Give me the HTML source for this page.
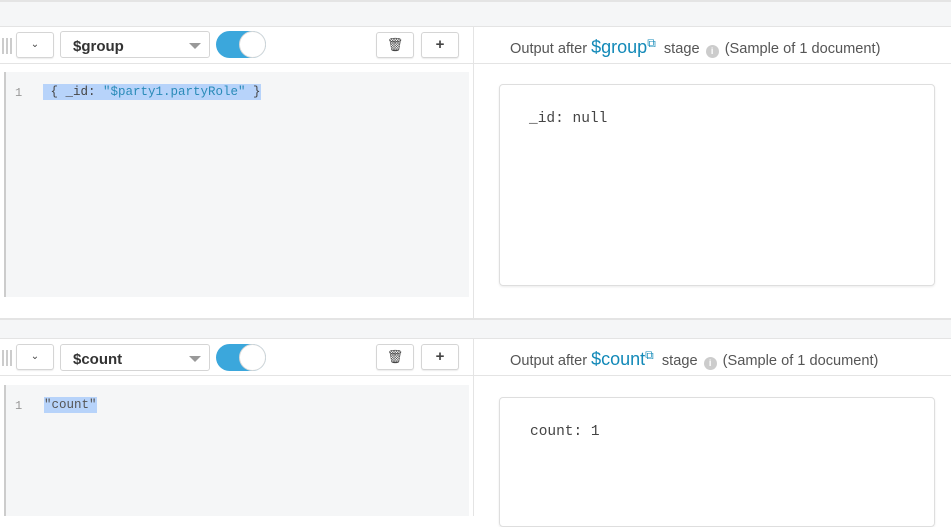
<!DOCTYPE html>
<html><head><style>
body{margin:0;width:951px;height:516px;overflow:hidden;background:#fff;font-family:"Liberation Sans",sans-serif;position:relative}
.a{position:absolute}
.band{left:0;width:951px;background:#f5f6f7;border-top:2px solid #e4e4e4;border-bottom:1px solid #e4e4e4;box-sizing:border-box}
.hdr{left:0;width:951px;height:38px;border-bottom:1px solid #e4e4e4;box-sizing:border-box}
.btn{background:#fff;border:1px solid #d5d5d5;border-radius:3px;box-shadow:0 1px 1px rgba(0,0,0,.08);box-sizing:border-box;text-align:center;color:#444}
.sel{background:#fff;border:1px solid #d5d5d5;border-radius:3px;box-sizing:border-box;font-weight:bold;font-size:15px;color:#333;padding:6px 0 0 12px}
.tri{position:absolute;right:8px;top:11px;width:0;height:0;border-left:6px solid transparent;border-right:6px solid transparent;border-top:6px solid #999}
.tog{width:50px;height:27px;border-radius:14px;background:#3ba7dc}
.knob{position:absolute;right:0;top:0;width:25px;height:25px;border-radius:50%;background:#fff;border:1px solid #d8d8d8}
.grip{width:12px;height:16px;background:repeating-linear-gradient(90deg,#ccc 0 2px,transparent 2px 4px)}
.ed{background:#f5f6f7;border-left:2px solid #ccc}
.ln{font-family:"Liberation Mono",monospace;font-size:12px;color:#999}
.code{font-family:"Liberation Mono",monospace;font-size:12.5px;background:#b7d3fa;color:#444;padding:1px 0}
.vd{left:473px;width:1px;background:#e4e4e4}
.out{font-size:14.6px;color:#555;white-space:nowrap}
.out b{font-weight:normal;color:#1289b8;font-size:18px}
.card{left:499px;width:436px;border:1px solid #dedede;border-radius:4px;box-shadow:0 1px 2px rgba(0,0,0,.08);box-sizing:border-box}
.doc{font-family:"Liberation Mono",monospace;font-size:14.5px;color:#444}
.info{display:inline-block;width:13px;height:13px;border-radius:50%;background:#ccc;color:#fff;font-size:9px;text-align:center;line-height:13px;vertical-align:-1px;font-weight:bold;margin:0 2px}
</style></head><body>
<div class="a band" style="top:0;height:27px"></div>
<div class="a band" style="top:318px;height:21px"></div>

<div class="a hdr" style="top:26px"></div>
<div class="a vd" style="top:26px;height:293px"></div>
<div class="a grip" style="left:2px;top:38px"></div>
<div class="a btn" style="left:16px;top:32px;width:38px;height:26px;font-size:10px;line-height:24px">&#8964;</div>
<div class="a sel" style="left:60px;top:31px;width:150px;height:27px">$group<div class="tri"></div></div>
<div class="a tog" style="left:216px;top:31px"><div class="knob"></div></div>
<div class="a btn" style="left:376px;top:32px;width:38px;height:26px;font-size:13px;line-height:24px">&#128465;</div>
<div class="a btn" style="left:421px;top:32px;width:38px;height:26px;font-size:15px;line-height:23px;font-weight:bold">+</div>
<div class="a ed" style="left:4px;top:72px;width:463px;height:225px"></div>
<div class="a ln" style="left:15px;top:86px">1</div>
<div class="a code" style="left:43px;top:84px">&nbsp;{ _id: <span style="color:#2a8bb8">"$party1.partyRole"</span> }</div>
<div class="a out" style="left:510px;top:36px">Output after <b>$group</b><span style="color:#1289b8;font-size:12px;vertical-align:6px">&#10697;</span>&nbsp; stage <span class="info">i</span> (Sample of 1 document)</div>
<div class="a card" style="top:84px;height:202px"></div>
<div class="a doc" style="left:529px;top:111px">_id: null</div>

<div class="a hdr" style="top:338px"></div>
<div class="a vd" style="top:338px;height:178px"></div>
<div class="a grip" style="left:2px;top:350px"></div>
<div class="a btn" style="left:16px;top:344px;width:38px;height:26px;font-size:10px;line-height:24px">&#8964;</div>
<div class="a sel" style="left:60px;top:344px;width:150px;height:27px">$count<div class="tri"></div></div>
<div class="a tog" style="left:216px;top:344px"><div class="knob"></div></div>
<div class="a btn" style="left:376px;top:344px;width:38px;height:26px;font-size:13px;line-height:24px">&#128465;</div>
<div class="a btn" style="left:421px;top:344px;width:38px;height:26px;font-size:15px;line-height:23px;font-weight:bold">+</div>
<div class="a ed" style="left:4px;top:385px;width:463px;height:131px"></div>
<div class="a ln" style="left:15px;top:399px">1</div>
<div class="a code" style="left:44px;top:397px;color:#555">"count"</div>
<div class="a out" style="left:510px;top:348px">Output after <b>$count</b><span style="color:#1289b8;font-size:12px;vertical-align:6px">&#10697;</span>&nbsp; stage <span class="info">i</span> (Sample of 1 document)</div>
<div class="a card" style="top:397px;height:130px"></div>
<div class="a doc" style="left:530px;top:424px">count: 1</div>
</body></html>
